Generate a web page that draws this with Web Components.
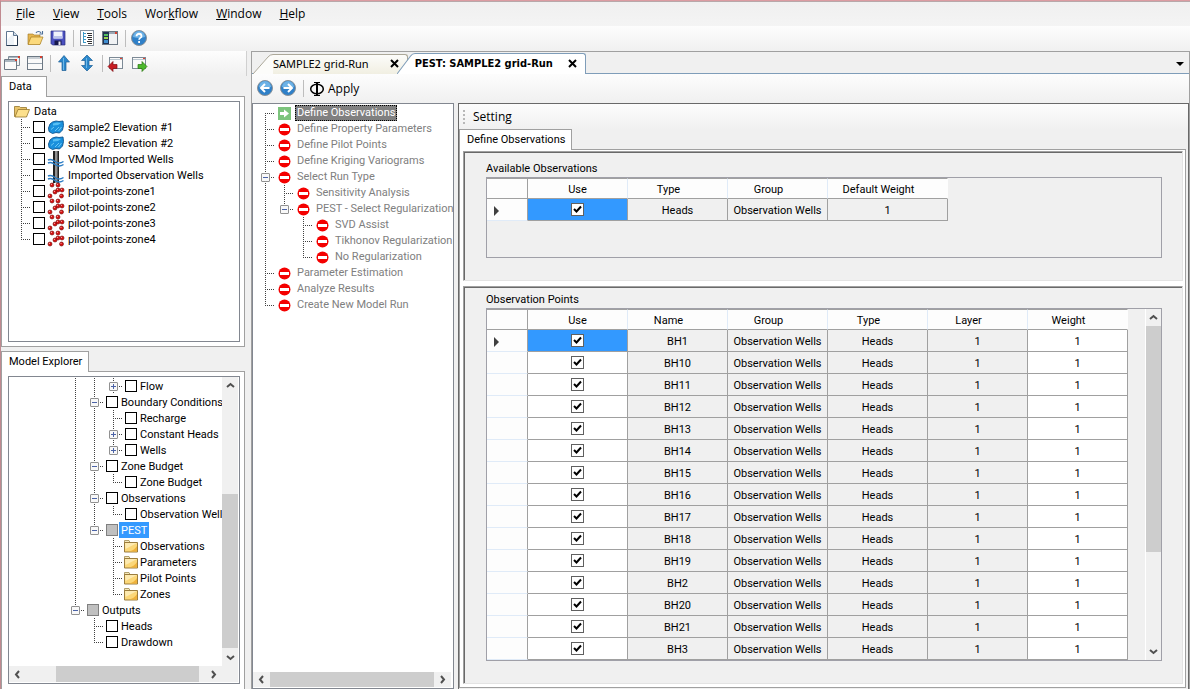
<!DOCTYPE html>
<html lang="en">
<head>
<meta charset="utf-8">
<title>PEST: SAMPLE2 grid-Run</title>
<style>
html, body { height: 100%; }
body { margin: 0; overflow: hidden; font: 11px/16px Roboto, "Liberation Sans", Arial, sans-serif; color: #000; background: #f0f0f0; }
</style>
</head>
<body>
<app-window></app-window>
<script>
const define = (name, html, setup) => {
  const tpl = document.createElement('template');
  tpl.innerHTML = html;
  customElements.define(name, class extends HTMLElement {
    connectedCallback() {
      if (this.shadowRoot) return;
      const root = this.attachShadow({ mode: 'open' });
      root.append(tpl.content.cloneNode(true));
      if (setup) setup(this, root);
    }
  });
};

/* ---------- icons ---------- */
const frame = '<rect x="1.5" y="2.5" width="13" height="11" fill="#fafafa" stroke="#7d8a96"/><path d="M2 4.500H14" stroke="#b9c6cf"/><rect x="12" y="3" width="2" height="1" fill="#e04030"/>';
const disc = '<circle cx="8" cy="8" r="7.500" fill="#2f80c8" stroke="#8a9299"/><path d="M2 7a6 6 0 0 1 12 0q-6 2-12 0Z" fill="#6db2e6"/>';
const dots = [[4, 2], [10, 2], [14, 7], [7, 9], [2, 13], [10, 7], [13.5, 13]];
const icons = {
  file: '<path d="M2.500 1.500h7l4 4v10h-11z" fill="#fff" stroke="#5f7690"/><path d="M3 10l7-8v13H3z" fill="#eef3f8"/><path d="M9.500 1.500v4h4" fill="#cfdcea" stroke="#5f7690"/><path d="M13.500 6v9.500h-11" fill="none" stroke="#24364c"/>',
  open: '<path d="M1 4h5l1 1h6v9H1z" fill="#e5b64f" stroke="#9a7420" stroke-width=".6"/><path d="M4 7h12l-3 7.500H1z" fill="#fbd97c" stroke="#a87c20" stroke-width=".7"/><path d="M9 3c1-2 4-2 5 0M15.500 1v3h-3" fill="none" stroke="#4c6f98" stroke-width="1.100"/>',
  save: '<path d="M1 1h14v14H2.500L1 13.500z" fill="#4a50c0" stroke="#2b2f80" stroke-width=".7"/><path d="M3.500 1.500h9v7h-9z" fill="#f0f2fc"/><path d="M3.500 6h9v2.500h-9z" fill="#bcc3ea"/><path d="M4.500 10.500h7V15h-7z" fill="#16184c"/><path d="M8.500 11.500h2V15h-2z" fill="#e8e8f4"/>',
  list: '<rect x="1.500" y=".5" width="13" height="15" fill="#fff" stroke="#8894a0"/><path d="M4.500 2v11M4 3.500h3M4 6.500h3M4 9.500h3M4 12.500h3" stroke="#3c9ac8" fill="none"/><path d="M8 3.500h5M9 5.500h4M8 7.500h5M9 9.500h4M8 11.500h5M9 13.500h4" stroke="#333"/>',
  panes: '<rect x=".5" y="1.500" width="15" height="13" fill="#f0f2f4" stroke="#6c7884"/><rect x="1" y="2" width="6" height="12" fill="#203050"/><rect x="2" y="4" width="4" height="2" fill="#52c060"/><rect x="2" y="7" width="4" height="2" fill="#9ad850"/><rect x="2" y="10" width="4" height="3" fill="#3f8ed0"/><path d="M7 3h8" stroke="#9aa7b4" stroke-width="2"/><rect x="13" y="2" width="2" height="2" fill="#d84030"/>',
  help: disc + '<path d="M5.500 6.200c0-3.300 5-3.300 5 0 0 1.700-2.400 1.700-2.400 3.500M8.100 11v2" fill="none" stroke="#fff" stroke-width="1.800"/>',
  cascade: '<path d="M4.500 1.500h11v9h-11z" fill="#f4f4f4" stroke="#7d8a96"/><path d="M5 2.500h10" stroke="#aab6c0"/><rect x="14" y="1" width="2" height="2" fill="#d84030"/><path d="M.5 4.500h12v10H.5z" fill="#fafafa" stroke="#6c7884"/><path d="M1 6h11" stroke="#aab6c0" stroke-width="2"/><rect x="11" y="4" width="2" height="2" fill="#d84030"/>',
  tile: '<rect x=".5" y="1.500" width="15" height="13" fill="#fafafa" stroke="#6c7884"/><path d="M1 3h14M1 8.500h14" stroke="#98a4b0" stroke-width="1"/><rect x="13" y="1" width="2" height="2" fill="#d84030"/>',
  up: '<path d="M8 .5L13.500 7H10v8.500H6V7H2.500z" fill="#2b88cc" stroke="#1c5f96" stroke-width=".7"/><path d="M7.500 3v12" stroke="#6fb8e8"/>',
  updown: '<path d="M8 0l5.500 5.500H10v5h3.500L8 16l-5.500-5.500H6v-5H2.500z" fill="#2b88cc" stroke="#1c5f96" stroke-width=".7"/><path d="M7.500 3v10" stroke="#6fb8e8"/>',
  dockleft: frame + '<path d="M0 11.500L5 6.500v3h4v4H5v3z" fill="#c81e24" stroke="#7c1014" stroke-width=".7"/>',
  dockright: frame + '<path d="M16 11.500L11 6.500v3H7v4h4v3z" fill="#4cb82c" stroke="#2a7410" stroke-width=".7"/>',
  back: disc + '<path d="M12.500 8H4.500M8 4L4 8l4 4" fill="none" stroke="#fff" stroke-width="2"/>',
  forward: disc + '<path d="M3.500 8h8M8 4l4 4-4 4" fill="none" stroke="#fff" stroke-width="2"/>',
  phi: '<ellipse cx="8" cy="8" rx="6.300" ry="4.700" fill="none" stroke="#000" stroke-width="1.500"/><path d="M8 1v14" stroke="#000" stroke-width="2"/><path d="M5 1.500h6M5 14.500h6" stroke="#000"/>',
  folderopen: '<path d="M.5 3.500h5l1 1h6v9H.5z" fill="#e8c46a" stroke="#94762c" stroke-width=".8"/><path d="M4 6.500h11.500l-3 7.500H1z" fill="#fce08c" stroke="#94762c" stroke-width=".8"/>',
  folder: '<path d="M1.500 5V2.500h4.500l1 2" fill="#f6e9bc" stroke="#a08a50" stroke-width=".8"/><path d="M1.500 4.500h13v9.500h-13z" fill="#fbd778" stroke="#907030" stroke-width=".9"/><path d="M2 5h12L2.500 11z" fill="#fdeab0"/><path d="M14 8v5.500H6q5-1 8-5.500z" fill="#efb23c"/>',
  layer: '<path d="M4.500 3L8 2l3 .5L15 2l.5 4.500-1 4.500-3 3-3.500-.5-3.500 1L1 12.500.5 9 2 5z" fill="#1a90dc" stroke="#0c5590" stroke-width=".9"/><path d="M5 4.500l4-1 4 .5-3 2-5 .5z" fill="#58c0f4"/><path d="M3 10.500l3-2.500M7 12l4-4M10.500 12l3-4" fill="none" stroke="#6cc8f6"/>',
  well: '<rect x="5" y="0" width="6" height="16" fill="#222"/><rect x="7" y="0" width="2.500" height="16" fill="#909090"/><path d="M0 9q3-1.500 7 1.500t8.500 0M0 12q3-1.500 7 1.500t8.500 0" fill="none" stroke="#2a7cc4" stroke-width="1.500"/>',
  points: dots.map(([x, y]) => `<circle cx="${x}" cy="${y}" r="2" fill="#d81010" stroke="#6c0808" stroke-width=".6"/><circle cx="${x - .5}" cy="${y - .7}" r=".6" fill="#ffb0b0"/>`).join(''),
  stop: '<circle cx="7.500" cy="8.500" r="6" fill="#f40000"/><rect x="3" y="7" width="9" height="3" fill="#fff"/>',
  go: '<rect x="1" y="2" width="13" height="13" fill="#7cc47c"/><path d="M3 7h4V4.500l5 4-5 4V10H3z" fill="#fff"/>'
};
define('ui-icon', '<style>:host{display:block;flex:none;width:16px;height:16px}svg{display:block;width:16px;height:16px;overflow:visible}</style><svg viewBox="0 0 16 16" aria-hidden="true"></svg>',
  (el, r) => { r.querySelector('svg').innerHTML = icons[el.getAttribute('name')]; });

/* ---------- menu bar and tool bars ---------- */
define('menu-bar', `<style>
:host{display:flex;gap:2px;height:24px;padding-left:7px;background:linear-gradient(#f0f0f0,#f4f4f4)}
</style><slot></slot>`);
define('menu-item', `<style>
:host{display:block}
button{font:12px/24px "Open Sans","Segoe UI",sans-serif;color:#000;border:0;background:none;padding:0 8px;height:24px;display:block}
</style><button type="button"><slot></slot></button>`);
define('tool-bar', `<style>
:host{display:flex;align-items:center;box-sizing:border-box;height:25px;background:linear-gradient(#fdfdfd,#f0f0f0)}
</style><slot></slot>`);
define('tool-button', `<style>
:host{display:block}
button{display:flex;align-items:center;justify-content:center;gap:3px;min-width:23px;height:23px;border:0;padding:0 1px 1px 0;background:none;color:#000;font:12px/16px "Open Sans","Segoe UI",sans-serif}
:host([wide]) button{padding:0 3px}
</style><button type="button"><slot></slot></button>`, (el, r) => {
  const icon = document.createElement('ui-icon');
  icon.setAttribute('name', el.getAttribute('icon'));
  const button = r.querySelector('button');
  button.prepend(icon);
  if (el.title) button.setAttribute('aria-label', el.title);
});
define('tool-separator', '<style>:host{display:block;width:1px;height:17px;margin:0 2px 0 3px;background:#bdbdbd}</style>');

/* ---------- scroll bar ---------- */
define('scroll-bar', `<style>
:host{display:flex;background:#f0f0f0;min-width:0;min-height:0}
:host([vertical]){flex-direction:column}
button{flex:none;display:flex;align-items:center;justify-content:center;width:17px;border:0;padding:0;background:none}
:host([vertical]) button{width:auto;height:17px}
svg{display:block;width:9px;height:9px;fill:none;stroke:#505050;stroke-width:2}
:host([vertical]) svg{rotate:90deg}
.track{flex:1;display:flex;min-width:0;min-height:0}
:host([vertical]) .track{flex-direction:column}
.thumb{background:#cdcdcd}
</style>
<button type="button" aria-label="Scroll back"><svg viewBox="0 0 9 9"><path d="M6 1L3 4.500l3 3.500"/></svg></button>
<div class="track"><span></span><div class="thumb"></div><span></span></div>
<button type="button" aria-label="Scroll forward"><svg viewBox="0 0 9 9"><path d="M3 1l3 3.500L3 8"/></svg></button>`,
  (el, r) => {
    const parts = el.getAttribute('parts').split(' ');
    [...r.querySelector('.track').children].forEach((c, i) => { c.style.flex = parts[i] + ' 1 0'; });
  });

/* ---------- tabbed panel ---------- */
define('tab-panel', `<style>
:host{display:flex;flex-direction:column;min-height:0;min-width:0}
button{align-self:flex-start;position:relative;min-width:46px;height:21px;margin:0 0 -1px;padding:0 6px 0 7px;border:1px solid #a0a0a0;border-bottom:0;background:#fff;font:inherit;line-height:18px;text-align:left;color:#000}
.body{flex:1;display:flex;flex-direction:column;min-height:0;border:1px solid #a0a0a0;background:#fff;padding:var(--pad,4px 4px 4px 6px)}
:host([open-end]) .body{border-bottom:0;padding-bottom:5px}
</style><button type="button" role="tab" aria-selected="true"></button><div class="body" role="tabpanel"><slot></slot></div>`,
  (el, r) => { r.querySelector('button').textContent = el.getAttribute('label'); });

/* ---------- tree ---------- */
define('tree-view', `<style>
:host{flex:1;display:grid;min-height:0;min-width:0;border:1px solid #828790;background:#fff;grid-template:minmax(0,1fr) auto/minmax(0,1fr) auto}
.rows{overflow:hidden;padding:1px 0 0 var(--indent,0px)}
</style><div class="rows" role="tree"><slot></slot></div><slot name="v"></slot><slot name="h"></slot><slot name="corner"></slot>`);
define('tree-node', `<style>
:host{display:flex;height:16px;white-space:nowrap;color:inherit;--line:#404040}
.g{flex:none;width:19px;height:16px;position:relative}
.v::before,.first::before,.end::before{content:"";position:absolute;left:9px;top:0;bottom:0;width:1px;background:repeating-linear-gradient(var(--line) 0 1px,transparent 1px 2px)}
.first::before{top:8px}.end::before{bottom:8px}
.h::after{content:"";position:absolute;left:9px;right:0;top:8px;height:1px;background:repeating-linear-gradient(90deg,var(--line) 0 1px,transparent 1px 2px)}
.g button{position:absolute;z-index:1;left:5px;top:4px;width:9px;height:9px;box-sizing:border-box;border:1px solid #919191;border-radius:1px;padding:0;background:linear-gradient(#4b63a7,#4b63a7) center/5px 1px no-repeat,#f8f8f8}
.g button.plus{background:linear-gradient(#4b63a7,#4b63a7) center/5px 1px no-repeat,linear-gradient(#4b63a7,#4b63a7) center/1px 5px no-repeat,#f8f8f8}
label,.item{display:flex;align-items:center;height:16px}
input{appearance:none;box-sizing:border-box;flex:none;width:12px;height:12px;margin:0 1px 0 2px;border:1px solid #000;background:#fff}
input.mixed{border-color:#808080;background:#c0c0c0}
ui-icon{margin-left:2px}
input + ui-icon{margin-left:2px}
.t{padding:0 2px;height:16px;line-height:var(--text-line,18px)}
ui-icon + .t{margin-left:2px}
:host([tight]) ui-icon{margin-left:0}
:host([tight]) ui-icon + .t{margin-left:-1px}
:host([selected]) .t{background:#3399ff;color:#fff}
:host([current]) .t{background:#808080;color:#fff;outline:1px dotted #000;outline-offset:-1px}
</style>`, (el, r) => {
  const kinds = { '.': '', '|': 'v', '+': 'v h', 'L': 'end h', 'F': 'first h' };
  el.setAttribute('role', 'treeitem');
  const marks = [...(el.getAttribute('lines') || '')];
  marks.forEach((m, i) => {
    const g = document.createElement('span');
    g.className = 'g ' + kinds[m];
    const toggle = el.getAttribute('toggle');
    if (toggle && i === marks.length - 1) {
      const b = document.createElement('button');
      b.type = 'button';
      b.className = toggle;
      b.setAttribute('aria-label', toggle === 'plus' ? 'Expand' : 'Collapse');
      g.append(b);
    }
    r.append(g);
  });
  const check = el.getAttribute('check');
  const row = document.createElement(check === null ? 'span' : 'label');
  row.className = 'item';
  if (check !== null) {
    const c = document.createElement('input');
    c.type = 'checkbox';
    c.className = check;
    row.append(c);
  }
  if (el.hasAttribute('icon')) {
    const i = document.createElement('ui-icon');
    i.setAttribute('name', el.getAttribute('icon'));
    row.append(i);
  }
  const t = document.createElement('span');
  t.className = 't';
  t.append(document.createElement('slot'));
  row.append(t);
  r.append(row);
});

/* ---------- document tabs ---------- */
define('doc-tab', `<style>
:host{display:flex;position:relative;height:20px;margin-right:-11px;font:11px/16px "Noto Sans",Tahoma,sans-serif;--edge:#aca899;--top:#fcfcfa;--fill:#f1efe2}
:host([active]){font-family:"DejaVu Sans Condensed",Tahoma,sans-serif;font-weight:bold;line-height:18px;--edge:#7f9db9;--top:#fff;--fill:#fff;height:21px;z-index:1}
svg{flex:none;display:block;width:20px;height:100%}
:host([active])>svg{width:18px}
.face{display:flex;align-items:center;box-sizing:border-box;padding-bottom:2px;border:1px solid var(--edge);border-left:0;border-bottom:0;border-radius:0 3px 0 0;background:linear-gradient(var(--top),var(--fill))}
:host([active]) .face{padding-bottom:1px}
button{font:inherit;color:inherit;border:0;background:none;padding:0;white-space:nowrap}
.close{display:flex;align-items:center;width:25px;height:16px;margin-left:13px;padding:0 8px}
.close svg{width:9px;height:9px}
:host([active]) .close{margin-left:7px}
</style>
<svg viewBox="0 0 20 20" preserveAspectRatio="none"><path d="M0 20L15 3Q17 .5 20 .5V20z" style="fill:var(--top)"/><path d="M0 20L15 3Q17 .5 20 .5" style="fill:none;stroke:var(--edge)"/></svg>
<div class="face"><button type="button" role="tab"><slot></slot></button><button class="close" type="button" aria-label="Close"><svg viewBox="0 0 9 9"><path d="M1 1l7 7M8 1L1 8" fill="none" stroke="#000" stroke-width="2"/></svg></button></div>`);
define('doc-strip', `<style>
:host{display:flex;align-items:flex-end;box-sizing:border-box;height:22px;padding-left:1px;box-shadow:inset 0 -1px #7f9db9;background:#f0f0f0}
.menu{margin:0 5px 6px auto;width:8px;height:9px;border:0;padding:0;background:none}
.menu::before{content:"";display:block;border:4px solid transparent;border-top-color:#000;border-bottom:0}
</style><slot></slot><button class="menu" type="button" aria-label="Open documents"></button>`);

/* ---------- observation groups and grids ---------- */
define('group-pane', `<style>
:host{display:flex;flex-direction:column;box-sizing:border-box;min-height:0;background:#f0f0f0;border:1px solid;border-color:#a0a0a0 #e3e3e3 #e3e3e3 #a0a0a0;box-shadow:inset 1px 1px #696969;padding:var(--top,8px) 20px 22px 22px}
h2{font:inherit;margin:0 0 1px;height:16px;line-height:18px}
</style><h2></h2><slot></slot>`, (el, r) => { r.querySelector('h2').textContent = el.getAttribute('label'); });

define('data-grid', `<style>
:host{flex:1;display:flex;justify-content:space-between;min-height:0;border:1px solid #a0a0a8;overflow:hidden}
.view{overflow:hidden;min-width:0}
table{table-layout:fixed;border-collapse:separate;border-spacing:0;font:inherit;line-height:16px}
th,td{box-sizing:border-box;height:22px;padding:2px 0 0;text-align:center;font-weight:normal;border:0 solid #a0a0a0;border-width:0 1px 1px 0;white-space:nowrap;overflow:hidden}
td{background:#f0f0f0}
td.use{padding:0}
td.edit{background:#fff}
thead th{height:21px;background:#fdfdfd;border-top-width:1px;border-right-color:#e0ebf8;padding-right:18px}
thead th:last-child{border-right-color:#fdfdfd}
thead th.check,thead th.corner{padding-right:0}
thead th.corner{border-right-color:#a0a0a0}
tbody th{background:#fdfdfd;border-bottom-color:#e0ebf8}
.arrow{display:block;width:0;margin-left:7px;border:5px solid transparent;border-left-color:#404040;border-right:0}
td.sel{background:#3399ff}
input{appearance:none;display:block;box-sizing:border-box;width:13px;height:13px;margin:0 auto;border:1px solid #606060;background:#fff}
input:checked{background:#fff url('data:image/svg+xml,<svg xmlns="http://www.w3.org/2000/svg" viewBox="0 0 11 11"><path d="M2 5l2.500 2.500L9 2.500" fill="none" stroke="black" stroke-width="2"/></svg>')}
</style><div class="view"><table><colgroup></colgroup><thead><tr></tr></thead><tbody></tbody></table></div><slot></slot>`, (el, r) => {
  const cols = el.getAttribute('columns').split(',').map(s => s.trim());
  const editable = el.getAttribute('editable');
  const wide = el.getAttribute('wide');
  const names = (el.getAttribute('names') || '').split(' ');
  const values = { Group: 'Observation Wells', Type: 'Heads', Layer: '1', Weight: '1', 'Default Weight': '1' };
  const widths = [41, ...cols.map(c => c === wide ? 120 : 100)];
  r.querySelector('table').style.width = widths.reduce((a, b) => a + b) + 'px';
  r.querySelector('colgroup').innerHTML = widths.map(w => `<col style="width:${w}px">`).join('');
  r.querySelector('thead tr').innerHTML = '<th class="corner"></th>' + cols.map(c => `<th scope="col" class="${c === 'Use' ? 'check' : ''}">${c}</th>`).join('');
  const blank = '<tr><th></th>' + cols.map(c => `<td class="${c === 'Use' || c === editable ? 'edit' : ''}"></td>`).join('') + '</tr>';
  r.querySelector('tbody').innerHTML = names.map((n, i) => '<tr><th scope="row">' + (i ? '' : '<span class="arrow"></span>') + '</th>' +
    cols.map(c => c === 'Use' ? `<td class="use ${i ? 'edit' : 'sel'}"><input type="checkbox" checked aria-label="Use ${n || 'Heads'}"></td>`
      : `<td class="${c === editable ? 'edit' : ''}">${c === 'Name' ? n : values[c]}</td>`).join('') + '</tr>').join('') + (names.length > 1 ? blank : '');
});

/* ---------- window ---------- */
define('app-window', `<style>
:host{display:flex;flex-direction:column;height:100vh;box-sizing:border-box;border-top:1px solid #dc9ca2;border-left:1px solid #c08a90;box-shadow:inset 0 1px #b8a8aa;padding-top:1px}
.main{flex:1;display:flex;min-height:0}
.left{flex:none;width:244px;display:flex;flex-direction:column;margin-right:6px}
.left tool-bar{border-right:1px solid #d0d0d0;margin-right:-2px}
.left tab-panel:first-of-type{flex:271 1 0;margin-bottom:4px}
.left tab-panel:last-of-type{flex:338 1 0}
#data{--indent:3px}
#explorer{padding:0 1px 1px 0}
.corner{background:#f0f0f0}
.doc{flex:1;display:flex;flex-direction:column;min-width:0;border:1px solid #a0a0a0;border-bottom:0}
.doc>tool-bar{height:29px;padding-left:2px}
.panes{flex:1;display:flex;gap:4px;min-height:0}
#flow{flex:none;width:200px;--indent:3px;--text-line:16px;color:#808080}
#flow scroll-bar{height:15px;margin:0 2px 1px 0}
.setting{flex:1;display:flex;flex-direction:column;min-width:0;border:1px solid #696969;border-bottom:0;padding-bottom:1px}
.setting header{display:flex;align-items:center;height:25px;gap:8px;padding-left:4px;font:12px/24px "Open Sans","Segoe UI",sans-serif;background:linear-gradient(#fdfdfd,#f0f0f0)}
.grip{width:2px;height:14px;background:repeating-linear-gradient(#b8b8b8 0 2px,transparent 2px 4px)}
.setting tab-panel{flex:1;--pad:1px 2px 3px 3px;margin-right:2px}
group-pane:first-child{flex:none;height:130px;margin-bottom:5px}
group-pane:last-child{flex:1;--top:4px}
.v{width:16px}
.h{height:16px}
.rows-bar{width:15px;border-left:1px solid #fff}
</style>
<menu-bar>
  <menu-item><u>F</u>ile</menu-item><menu-item><u>V</u>iew</menu-item><menu-item><u>T</u>ools</menu-item><menu-item>Wor<u>k</u>flow</menu-item><menu-item><u>W</u>indow</menu-item><menu-item><u>H</u>elp</menu-item>
</menu-bar>
<tool-bar>
  <tool-button icon="file" title="New"></tool-button><tool-button icon="open" title="Open"></tool-button><tool-button icon="save" title="Save"></tool-button>
  <tool-separator></tool-separator>
  <tool-button icon="list" title="Tree"></tool-button><tool-button icon="panes" title="Panes"></tool-button>
  <tool-separator></tool-separator>
  <tool-button icon="help" title="Help"></tool-button>
</tool-bar>
<div class="main">
  <div class="left">
    <tool-bar>
      <tool-button icon="cascade" title="Cascade"></tool-button><tool-button icon="tile" title="Tile"></tool-button>
      <tool-separator></tool-separator>
      <tool-button icon="up" title="Up"></tool-button><tool-button icon="updown" title="Up and down"></tool-button>
      <tool-separator></tool-separator>
      <tool-button icon="dockleft" title="Import"></tool-button><tool-button icon="dockright" title="Export"></tool-button>
    </tool-bar>
    <tab-panel label="Data">
      <tree-view id="data">
        <tree-node icon="folderopen">Data</tree-node>
        <tree-node lines="+" check="off" icon="layer">sample2 Elevation #1</tree-node>
        <tree-node lines="+" check="off" icon="layer">sample2 Elevation #2</tree-node>
        <tree-node lines="+" check="off" icon="well">VMod Imported Wells</tree-node>
        <tree-node lines="+" check="off" icon="well">Imported Observation Wells</tree-node>
        <tree-node lines="+" check="off" icon="points">pilot-points-zone1</tree-node>
        <tree-node lines="+" check="off" icon="points">pilot-points-zone2</tree-node>
        <tree-node lines="+" check="off" icon="points">pilot-points-zone3</tree-node>
        <tree-node lines="L" check="off" icon="points">pilot-points-zone4</tree-node>
      </tree-view>
    </tab-panel>
    <tab-panel label="Model Explorer" open-end>
      <tree-view id="explorer">
        <tree-node lines="...||+" toggle="plus" check="off">Flow</tree-node>
        <tree-node lines="...|+" toggle="minus" check="off">Boundary Conditions</tree-node>
        <tree-node lines="...||+" check="off">Recharge</tree-node>
        <tree-node lines="...||+" toggle="plus" check="off">Constant Heads</tree-node>
        <tree-node lines="...||L" toggle="plus" check="off">Wells</tree-node>
        <tree-node lines="...|+" toggle="minus" check="off">Zone Budget</tree-node>
        <tree-node lines="...||L" check="off">Zone Budget</tree-node>
        <tree-node lines="...|+" toggle="minus" check="off">Observations</tree-node>
        <tree-node lines="...||L" check="off">Observation Wells</tree-node>
        <tree-node lines="...|L" toggle="minus" check="mixed" selected>PEST</tree-node>
        <tree-node lines="...|.+" icon="folder" tight>Observations</tree-node>
        <tree-node lines="...|.+" icon="folder" tight>Parameters</tree-node>
        <tree-node lines="...|.+" icon="folder" tight>Pilot Points</tree-node>
        <tree-node lines="...|.L" icon="folder" tight>Zones</tree-node>
        <tree-node lines="...L" toggle="minus" check="mixed">Outputs</tree-node>
        <tree-node lines="....+" check="off">Heads</tree-node>
        <tree-node lines="....L" check="off">Drawdown</tree-node>
        <scroll-bar slot="v" class="v" vertical parts="100 154 1"></scroll-bar>
        <scroll-bar slot="h" class="h" parts="30 143 6"></scroll-bar>
        <span slot="corner" class="corner"></span>
      </tree-view>
    </tab-panel>
  </div>
  <div class="doc">
    <doc-strip><doc-tab>SAMPLE2 grid-Run</doc-tab><doc-tab active>PEST: SAMPLE2 grid-Run</doc-tab></doc-strip>
    <tool-bar>
      <tool-button icon="back" title="Back"></tool-button><tool-button icon="forward" title="Forward"></tool-button>
      <tool-separator></tool-separator>
      <tool-button icon="phi" wide>Apply</tool-button>
    </tool-bar>
    <div class="panes">
      <tree-view id="flow">
        <tree-node lines="F" icon="go" current>Define Observations</tree-node>
        <tree-node lines="+" icon="stop">Define Property Parameters</tree-node>
        <tree-node lines="+" icon="stop">Define Pilot Points</tree-node>
        <tree-node lines="+" icon="stop">Define Kriging Variograms</tree-node>
        <tree-node lines="+" toggle="minus" icon="stop">Select Run Type</tree-node>
        <tree-node lines="|+" icon="stop">Sensitivity Analysis</tree-node>
        <tree-node lines="|L" toggle="minus" icon="stop">PEST - Select Regularization</tree-node>
        <tree-node lines="|.+" icon="stop">SVD Assist</tree-node>
        <tree-node lines="|.+" icon="stop">Tikhonov Regularization</tree-node>
        <tree-node lines="|.L" icon="stop">No Regularization</tree-node>
        <tree-node lines="+" icon="stop">Parameter Estimation</tree-node>
        <tree-node lines="+" icon="stop">Analyze Results</tree-node>
        <tree-node lines="L" icon="stop">Create New Model Run</tree-node>
        <span slot="v"></span>
        <scroll-bar slot="h" parts="0 1 0"></scroll-bar>
      </tree-view>
      <section class="setting">
        <header><span class="grip"></span>Setting</header>
        <tab-panel label="Define Observations">
          <group-pane label="Available Observations">
            <data-grid columns="Use, Type, Group, Default Weight" wide="Default Weight"></data-grid>
          </group-pane>
          <group-pane label="Observation Points">
            <data-grid columns="Use, Name, Group, Type, Layer, Weight" editable="Weight" names="BH1 BH10 BH11 BH12 BH13 BH14 BH15 BH16 BH17 BH18 BH19 BH2 BH20 BH21 BH3">
              <scroll-bar class="rows-bar" vertical parts="0 227 91"></scroll-bar>
            </data-grid>
          </group-pane>
        </tab-panel>
      </section>
    </div>
  </div>
</div>`);
</script>
</body>
</html>
